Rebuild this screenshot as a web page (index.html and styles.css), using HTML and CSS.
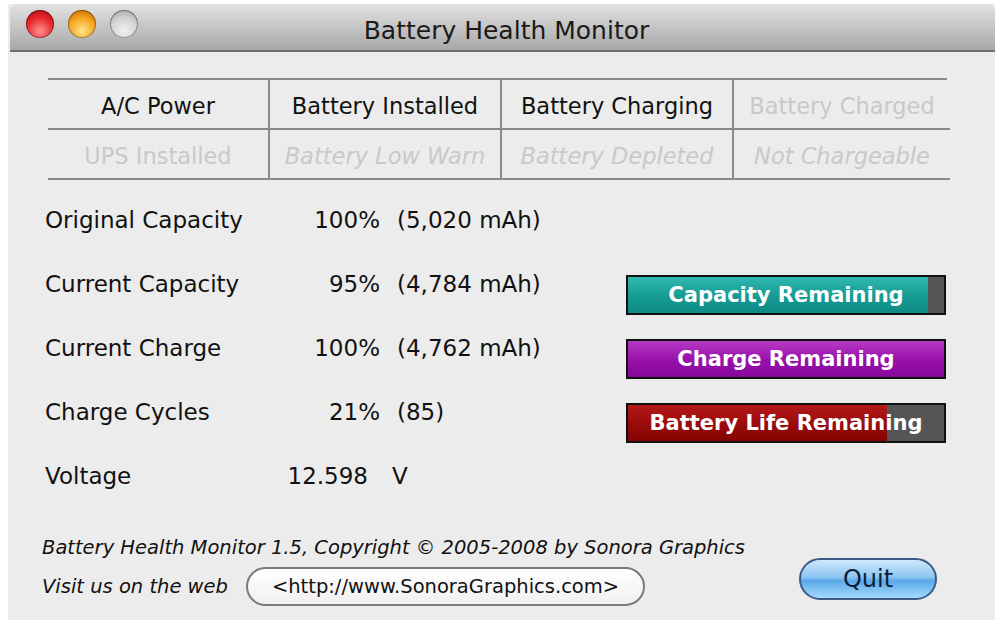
FILE: index.html
```html
<!DOCTYPE html>
<html lang="en">
<head>
    <meta charset="UTF-8">
    <title>Battery Health Monitor</title>
    <link rel="stylesheet" href="styles.css">
</head>
<body>

    <div class="window">
        <div class="titlebar">
            <div class="lights">
                <span class="light red"></span>
                <span class="light orange"></span>
                <span class="light grey"></span>
            </div>
            <div class="title">Battery Health Monitor</div>
        </div>

        <div class="content">
            <!-- status flags, grey ones are off -->
            <div class="flags">
                <div class="flag on">A/C Power</div>
                <div class="flag on">Battery Installed</div>
                <div class="flag on">Battery Charging</div>
                <div class="flag">Battery Charged</div>
                <div class="flag">UPS Installed</div>
                <div class="flag warn">Battery Low Warn</div>
                <div class="flag warn">Battery Depleted</div>
                <div class="flag warn">Not Chargeable</div>
            </div>

            <div class="stats">
                <div class="label">Original Capacity</div>
                <div class="pct">100%</div>
                <div class="detail">(5,020 mAh)</div>
                <div class="bar-cell"></div>

                <div class="label">Current Capacity</div>
                <div class="pct">95%</div>
                <div class="detail">(4,784 mAh)</div>
                <div class="bar-cell">
                    <div class="bar capacity"><div class="fill" style="width: 95%"></div><span>Capacity Remaining</span></div>
                </div>

                <div class="label">Current Charge</div>
                <div class="pct">100%</div>
                <div class="detail">(4,762 mAh)</div>
                <div class="bar-cell">
                    <div class="bar charge"><div class="fill" style="width: 100%"></div><span>Charge Remaining</span></div>
                </div>

                <div class="label">Charge Cycles</div>
                <div class="pct">21%</div>
                <div class="detail">(85)</div>
                <div class="bar-cell">
                    <div class="bar life"><div class="fill" style="width: 82%"></div><span>Battery Life Remaining</span></div>
                </div>

                <div class="label">Voltage</div>
                <div class="pct volt">12.598</div>
                <div class="detail volt-unit">V</div>
                <div class="bar-cell"></div>
            </div>

            <div class="footer">
                <div class="credits">
                    <p class="copy">Battery Health Monitor 1.5, Copyright &copy; 2005-2008 by Sonora Graphics</p>
                    <div class="web">
                        <span>Visit us on the web</span>
                        <button class="link-btn">&lt;http://www.SonoraGraphics.com&gt;</button>
                    </div>
                </div>
                <button class="quit">Quit</button>
            </div>
        </div>
    </div>

</body>
</html>
```

FILE: styles.css
```css
body {
    margin: 0;
    background: #ffffff;
    font-family: 'DejaVu Sans', 'Liberation Sans', sans-serif;
    color: #111111;
}

.window {
    margin: 4px 5px 0 8px;
    height: 616px;
    background: #ececec;
    display: flex;
    flex-direction: column;
}

.titlebar {
    height: 46px;
    margin-left: 2px;
    background: linear-gradient(#e2e2e2, #c2c2c2 55%, #a8a8a8);
    border-bottom: 2px solid #6e6e6e;
    border-radius: 6px 6px 0 0;
    display: flex;
    align-items: center;
}

.lights {
    display: flex;
    gap: 14px;
    padding-left: 16px;
    margin-top: -6px;
}

.light {
    width: 28px;
    height: 28px;
    border-radius: 50%;
    box-shadow: inset 0 0 0 1px rgba(0, 0, 0, 0.35);
}

.red {
    background: radial-gradient(circle at 50% 75%, #ff8f8f, #e8252a 55%, #9c0c10);
}

.orange {
    background: radial-gradient(circle at 50% 75%, #ffe38a, #f4a21a 55%, #b45a05);
}

.grey {
    background: radial-gradient(circle at 50% 75%, #f2f2f2, #cfcfcf 55%, #9a9a9a);
}

.title {
    flex: 1;
    text-align: center;
    font-size: 25px;
    margin-left: -120px;
    margin-top: 6px;
    color: #1a1a1a;
}

.content {
    flex: 1;
    padding: 26px 48px 0 30px;
    display: flex;
    flex-direction: column;
}

/* flags table */
.flags {
    display: grid;
    grid-template-columns: 220px 232px 232px 218px;
    margin-left: 10px;
    border-top: 2px solid #8a8a8a;
}

.flag {
    height: 44px;
    border-bottom: 2px solid #8a8a8a;
    border-left: 2px solid #8a8a8a;
    display: flex;
    align-items: center;
    justify-content: center;
    font-size: 22.5px;
    color: #c9c9c9;
    padding-top: 4px;
}

.flag:nth-child(4n+1) {
    border-left: none;
}

.flag.on {
    color: #111111;
}

.flag.warn {
    font-style: italic;
}

/* numbers */
.stats {
    display: grid;
    grid-template-columns: 235px 100px 246px 320px;
    grid-auto-rows: 64px;
    margin-top: 8px;
    margin-left: 7px;
    font-size: 23px;
    align-items: center;
}

.pct {
    text-align: right;
}

.detail {
    padding-left: 17px;
}

.volt {
    padding-right: 12px;
}

.volt-unit {
    padding-left: 12px;
}

.bar-cell {
    padding-top: 22px;
}

.bar {
    position: relative;
    height: 36px;
    border: 2px solid #111111;
    background: #555555;
    display: flex;
    align-items: center;
    justify-content: center;
}

.bar .fill {
    position: absolute;
    left: 0;
    top: 0;
    bottom: 0;
}

.bar span {
    position: relative;
    color: #ffffff;
    font-size: 21px;
    font-weight: bold;
}

.capacity .fill {
    background: linear-gradient(#31b9b1, #169d96 50%, #0e8a84);
}

.charge .fill {
    background: linear-gradient(#b43ac4, #9a12ac 50%, #86069a);
}

.life .fill {
    background: linear-gradient(#b31a1a, #9c0b0b 50%, #850404);
}

/* bottom */
.footer {
    margin-top: 28px;
    display: flex;
    align-items: flex-end;
    justify-content: space-between;
    padding-left: 4px;
}

.copy {
    margin: 0;
    font-size: 19.5px;
    font-style: italic;
}

.web {
    display: flex;
    align-items: center;
    gap: 18px;
    margin-top: 8px;
    font-size: 19.5px;
    font-style: italic;
}

.link-btn {
    font-family: 'DejaVu Sans', 'Liberation Sans', sans-serif;
    font-size: 19.5px;
    color: #111111;
    background: linear-gradient(#ffffff, #f0f0f0);
    border: 2px solid #7a7a7a;
    border-radius: 20px;
    padding: 6px 24px;
}

.quit {
    width: 138px;
    height: 42px;
    margin-bottom: 6px;
    margin-right: 10px;
    font-family: 'DejaVu Sans', 'Liberation Sans', sans-serif;
    font-size: 24px;
    color: #0d1e3a;
    border: 2px solid #3d5a86;
    border-radius: 21px;
    background: linear-gradient(#cfe8fb, #8cc6f2 45%, #5aa8ea 55%, #a5dafc);
}
```
